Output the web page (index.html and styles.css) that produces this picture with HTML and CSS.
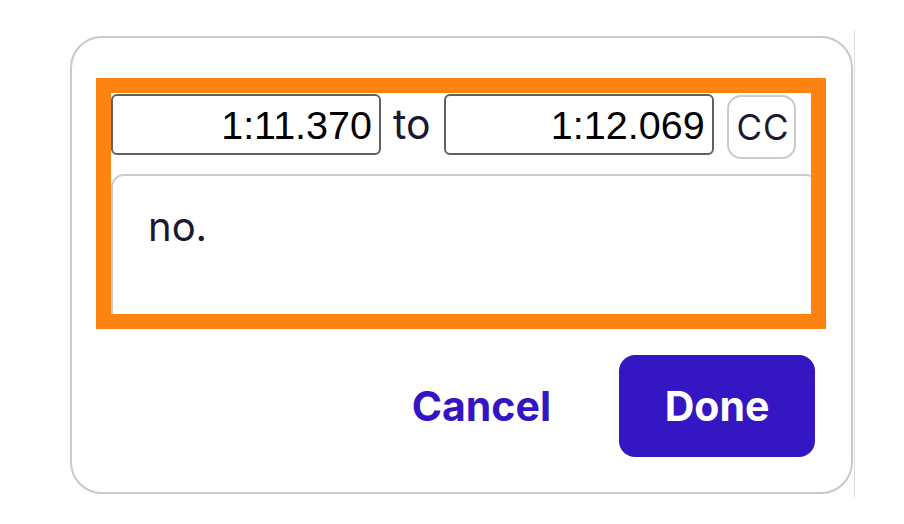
FILE: index.html
```html
<!DOCTYPE html>
<html lang="en">
<head>
<meta charset="utf-8">
<title>Edit caption</title>
<link rel="stylesheet" href="styles.css">
</head>
<body>
<div class="stage">
  <div class="card">
    <div class="focus-box">
      <div class="time-row">
        <input class="time-input" type="text" value="1:11.370">
        <span class="to">to</span>
        <input class="time-input" type="text" value="1:12.069">
        <button class="cc-btn" type="button">CC</button>
      </div>
      <textarea class="caption-text">no.</textarea>
    </div>
    <div class="actions">
      <button class="btn-cancel" type="button">Cancel</button>
      <button class="btn-done" type="button">Done</button>
    </div>
  </div>
</div>
</body>
</html>
```

FILE: styles.css
```css
html, body {
  margin: 0;
  padding: 0;
  background: #ffffff;
}

body {
  font-family: Inter, "Noto Sans", sans-serif;
  color: #1a1832;
}

.stage {
  margin-top: 30px;
  margin-left: 70px;
  width: 785px;
  padding-top: 6px;
  padding-bottom: 3px;
  border-right: 1px solid #dcdce0;
  box-sizing: border-box;
}

.card {
  width: 783px;
  height: 458px;
  box-sizing: border-box;
  border: 2px solid #c8c8cd;
  border-radius: 32px;
  padding: 40px 25px 0 24px;
  display: flex;
  flex-direction: column;
}

.focus-box {
  width: 730px;
  height: 251px;
  box-sizing: border-box;
  border: 15px solid #fd8410;
  overflow: hidden;
}

.time-row {
  display: flex;
  align-items: flex-start;
  padding-top: 1px;
}

.time-input {
  width: 270px;
  height: 61px;
  box-sizing: border-box;
  border: 2px solid #606060;
  border-radius: 6px;
  padding: 2px 7px 0 0;
  margin: 0;
  text-align: right;
  font-family: "Liberation Sans", Arial, sans-serif;
  font-size: 39.5px;
  color: #000;
  background: #fff;
}

.to {
  font-size: 41px;
  line-height: 61px;
  margin: 0 13px 0 12px;
}

.cc-btn {
  margin: 1px 0 0 13px;
  width: 69px;
  height: 64px;
  box-sizing: border-box;
  border: 2px solid #cacacf;
  border-radius: 14px;
  background: #fff;
  padding: 0;
  font-family: Inter, "Noto Sans", sans-serif;
  font-size: 35px;
  letter-spacing: 1px;
  text-indent: 4px;
  color: #1a1832;
}

.caption-text {
  display: block;
  margin-top: 15px;
  width: 708px;
  height: 160px;
  box-sizing: border-box;
  border: 2px solid #cbcbd0;
  border-radius: 13px;
  padding: 27px 35px;
  font-family: Inter, "Noto Sans", sans-serif;
  font-size: 40px;
  line-height: 48px;
  color: #1a1832;
  resize: none;
  outline: none;
}

.actions {
  display: flex;
  justify-content: flex-end;
  align-items: center;
  margin-top: 26px;
  margin-right: 11px;
}

.btn-cancel {
  background: none;
  border: none;
  padding: 0;
  margin-right: 68px;
  font-family: Inter, "Noto Sans", sans-serif;
  font-size: 41px;
  font-weight: 700;
  color: #3515c3;
}

.btn-done {
  width: 196px;
  height: 102px;
  border: none;
  border-radius: 16px;
  background: #3516c3;
  color: #ffffff;
  font-family: Inter, "Noto Sans", sans-serif;
  font-size: 41px;
  font-weight: 700;
}
```
